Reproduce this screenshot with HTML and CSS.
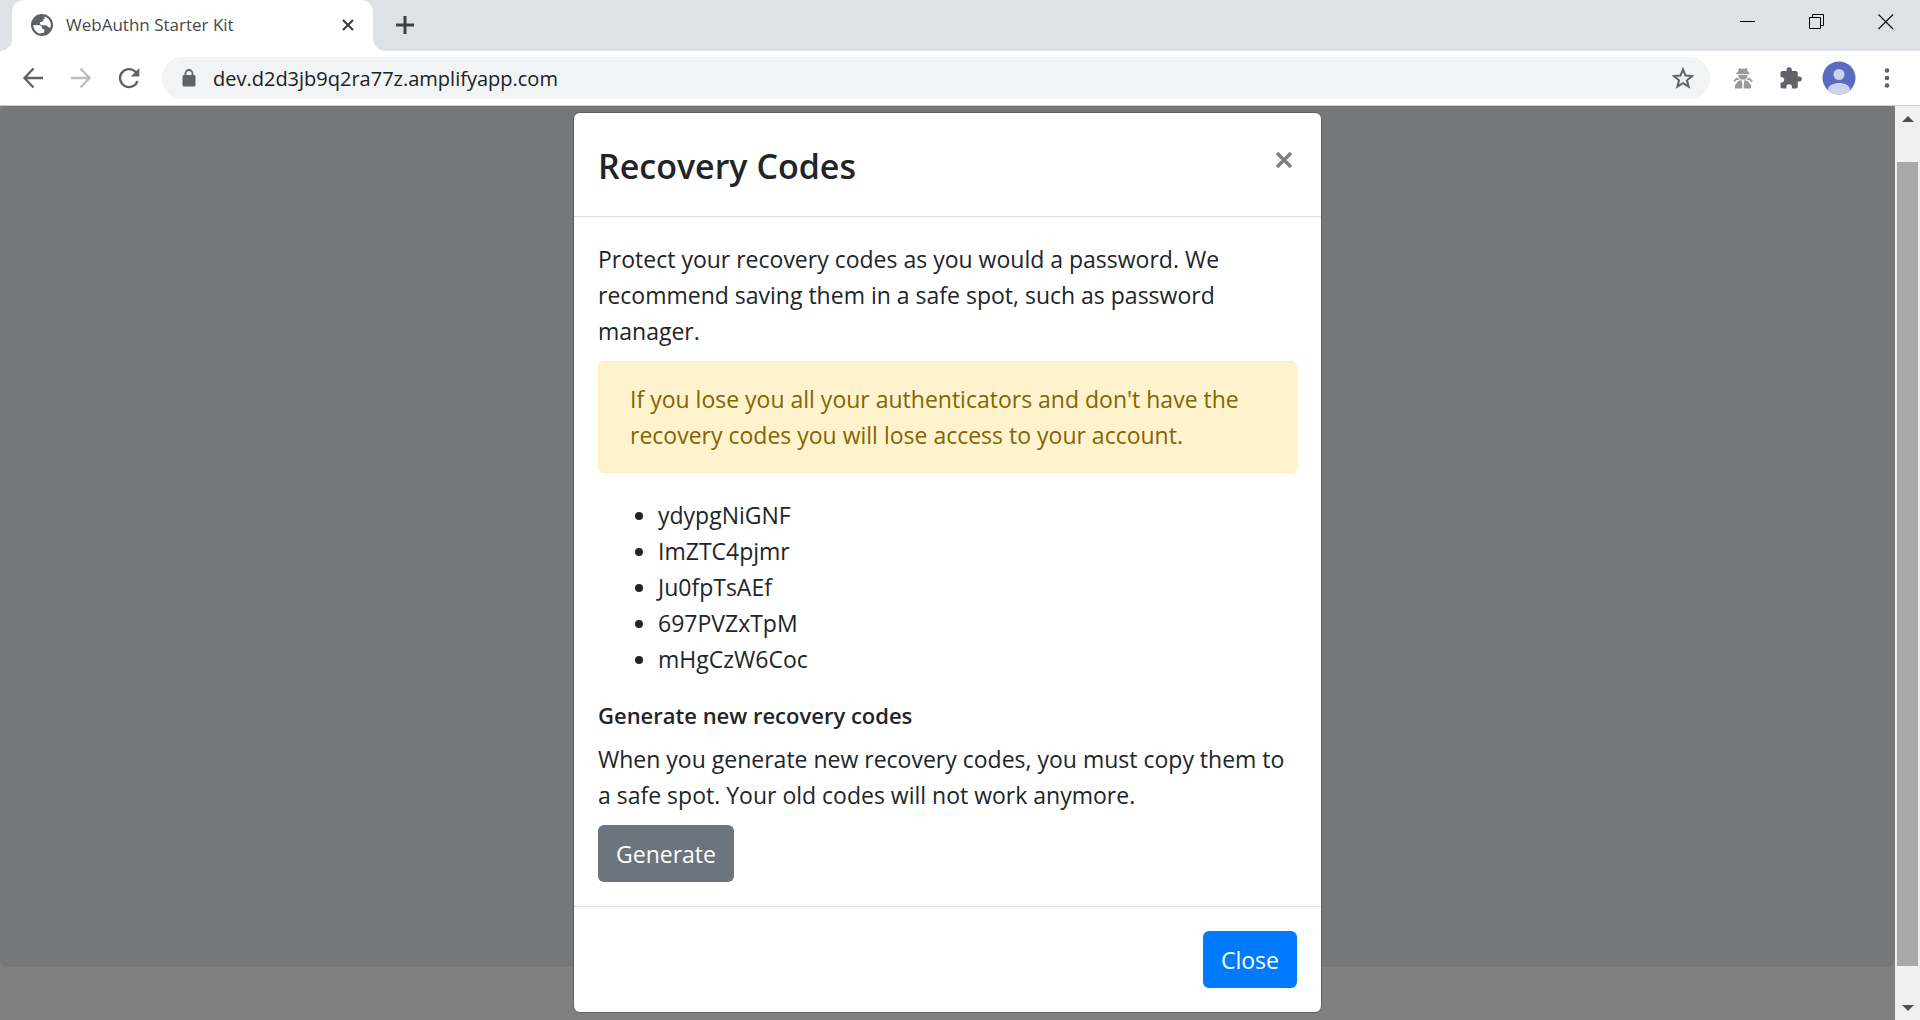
FILE: index.html
```html
<!DOCTYPE html>
<html lang="en">
<head>
<meta charset="utf-8">
<title>WebAuthn Starter Kit</title>
<link rel="stylesheet" href="styles.css">
</head>
<body>
<header class="browser">
  <div class="tabstrip">
    <div class="tab">
      <svg class="globe" width="22" height="22" viewBox="0 0 22 22" aria-hidden="true"><circle cx="11" cy="11" r="11" fill="#5f6368"/><path d="M13 2.500C17 3.300 19.800 6.800 19.800 11c0 .8-.1 1.500-.3 2.200-1 .6-2.300.4-2.800-.7-.5-1-1.300-1.300-2.600-1.300H11c-1.300 0-2-.8-2-1.900s.8-1.800 2-1.800c1 0 1.300-.5 1.300-1.300 0-.9.4-1.200 1.200-1.400.6-.2.4-1.500-.5-2.300z" fill="#fff"/><path d="M2.300 11h5.200c2 0 3.500 1.200 3.500 3 0 .8.500 1 1.300 1 1 0 1.300.6 1.200 1.500l-.3 1.200c-.2.800-.7 1.300-1.500 1.300H11c-1 0-1.500.3-1.800.6C5.300 18.800 2.300 15.300 2.300 11z" fill="#fff"/></svg>
      <span class="tab-title">WebAuthn Starter Kit</span>
      <button class="icon-btn" aria-label="Close tab"><svg width="14" height="14" viewBox="0 0 14 14"><path d="M2 2l10 10M12 2L2 12" stroke="#3c4043" stroke-width="2.200" fill="none"/></svg></button>
    </div>
    <button class="icon-btn new-tab" aria-label="New tab"><svg width="18" height="18" viewBox="0 0 18 18"><path d="M9 0v18M0 9h18" stroke="#3c4043" stroke-width="3" fill="none"/></svg></button>
    <div class="window-controls">
      <button class="icon-btn" aria-label="Minimize"><svg width="16" height="16" viewBox="0 0 16 16"><path d="M0 7.500h15" stroke="#000" fill="none"/></svg></button>
      <button class="icon-btn" aria-label="Restore"><svg width="16" height="16" viewBox="0 0 16 16"><path d="M.5 3.500h11v11H.5zM3.500 3.500v-3h11v11h-3" stroke="#000" fill="none"/></svg></button>
      <button class="icon-btn" aria-label="Close window"><svg width="16" height="16" viewBox="0 0 16 16"><path d="M.5.5l14.500 14.500M15 .5L.5 15" stroke="#111" stroke-width="1.200" fill="none"/></svg></button>
    </div>
  </div>
  <div class="toolbar">
    <div class="nav">
      <button class="icon-btn" aria-label="Back"><svg width="24" height="24" viewBox="0 0 24 24"><path d="M22 12H4M12.500 2.500L3.500 12l9 9.500" stroke="#5f6368" stroke-width="2.400" fill="none"/></svg></button>
      <button class="icon-btn" aria-label="Forward"><svg width="24" height="24" viewBox="0 0 24 24"><path d="M2 12h18M11.500 2.500l9 9.500-9 9.500" stroke="#babcbe" stroke-width="2.400" fill="none"/></svg></button>
      <button class="icon-btn" aria-label="Reload"><svg width="24" height="24" viewBox="0 0 24 24"><path d="M20.500 15.200A9 9 0 1 1 18.300 5.600L20 7.500" stroke="#5f6368" stroke-width="2.400" fill="none"/><path d="M22.300 2v8.500h-8.500z" fill="#5f6368"/></svg></button>
    </div>
    <div class="omnibox">
      <svg width="14" height="18" viewBox="0 0 14 18" aria-hidden="true"><rect x="0.500" y="6" width="13" height="11.500" rx="1.500" fill="#5f6368"/><path d="M3.500 7V4.500a3.500 3.500 0 0 1 7 0V7" stroke="#5f6368" stroke-width="1.800" fill="none"/></svg>
      <input class="url" type="text" aria-label="Address" value="dev.d2d3jb9q2ra77z.amplifyapp.com">
      <button class="icon-btn" aria-label="Bookmark"><svg width="22" height="22" viewBox="0 0 22 22"><path d="M11 2.500l2.500 6.100 6.500.5-5 4.200 1.600 6.400-5.600-3.500-5.600 3.500L7 13.300 2 9.100l6.500-.5z" stroke="#5f6368" stroke-width="2" fill="none"/></svg></button>
    </div>
    <div class="actions">
      <button class="icon-btn" aria-label="Extension"><svg width="20" height="22" viewBox="0 0 20 22" fill="#999"><path d="M5 5L6 1l2.200.8h3.600L14 1l1 4 1.500.6v1.600h-13V5.600zM5.500 8h9v2L12.500 12.500h-5L5.500 10zM0 14l3.300-3.300 3 1-.6 1.500-2-.4-2 2.200zM20 14l-3.300-3.300-3 1 .6 1.500 2-.4 2 2.200z"/><path d="M5 14.200l3.500-1.200.8 4.500v4H2v-3.300zM15 14.200l-3.500-1.200-.8 4.500v4H18v-3.300z"/></svg></button>
      <button class="icon-btn" aria-label="Extensions"><svg width="22" height="22" viewBox="0 0 22 22"><path d="M19.300 9.500h-1.500V6a2 2 0 0 0-2-2h-4V2.800a2.600 2.600 0 0 0-5.200 0V4H2.500a2 2 0 0 0-2 2v4H2a2.800 2.800 0 0 1 0 5.500H.5V19.500a2 2 0 0 0 2 2h3.800V20a2.800 2.800 0 0 1 5.600 0v1.500h3.900a2 2 0 0 0 2-2v-5h1.500a2.500 2.500 0 0 0 0-5z" fill="#5f6368"/></svg></button>
      <button class="icon-btn" aria-label="Profile"><svg width="34" height="34" viewBox="0 0 34 34"><defs><clipPath id="avatar"><circle cx="17" cy="17" r="16.500"/></clipPath></defs><circle cx="17" cy="17" r="16.500" fill="#5c6bc0"/><g clip-path="url(#avatar)" fill="#ced3ec"><circle cx="17" cy="13.500" r="5.500"/><path d="M6 34v-5c0-5 6-7 11-7s11 2 11 7v5z"/></g></svg></button>
      <button class="icon-btn" aria-label="Menu"><svg width="6" height="20" viewBox="0 0 6 20" fill="#5f6368"><circle cx="3" cy="2.500" r="2.300"/><circle cx="3" cy="10" r="2.300"/><circle cx="3" cy="17.500" r="2.300"/></svg></button>
    </div>
  </div>
</header>
<div class="viewport">
  <main class="page">
    <div class="jumbotron"></div>
    <section class="modal" role="dialog" aria-modal="true" aria-labelledby="modal-title">
      <header class="modal-header">
        <h2 class="modal-title" id="modal-title">Recovery Codes</h2>
        <button class="icon-btn dismiss" aria-label="Dismiss"><svg width="18" height="18" viewBox="0 0 18 18"><path d="M2 2l14 14M16 2L2 16" stroke="#7f7f7f" stroke-width="3.600" fill="none"/></svg></button>
      </header>
      <div class="modal-body">
        <p class="text">Protect your recovery codes as you would a password. We<br>recommend saving them in a safe spot, such as password<br>manager.</p>
        <div class="alert" role="alert">If you lose you all your authenticators and don't have the<br>recovery codes you will lose access to your account.</div>
        <ul class="codes">
          <li>ydypgNiGNF</li>
          <li>ImZTC4pjmr</li>
          <li>Ju0fpTsAEf</li>
          <li>697PVZxTpM</li>
          <li>mHgCzW6Coc</li>
        </ul>
        <h3 class="subtitle">Generate new recovery codes</h3>
        <p class="text">When you generate new recovery codes, you must copy them to<br>a safe spot. Your old codes will not work anymore.</p>
        <button class="btn btn-secondary">Generate</button>
      </div>
      <footer class="modal-footer">
        <button class="btn btn-primary">Close</button>
      </footer>
    </section>
  </main>
  <div class="scrollbar" aria-hidden="true">
    <svg width="12" height="6" viewBox="0 0 12 6"><path d="M0 6l6-6 6 6z" fill="#505050"/></svg>
    <div class="thumb"></div>
    <svg width="12" height="6" viewBox="0 0 12 6"><path d="M0 0l6 6 6-6z" fill="#505050"/></svg>
  </div>
</div>
</body>
</html>
```
FILE: styles.css
```css
* { box-sizing: border-box; }

body {
  margin: 0;
  min-height: 100vh;
  display: flex;
  flex-direction: column;
  font-family: "Open Sans", "Noto Sans", sans-serif;
  color: #212529;
}

.icon-btn {
  display: flex;
  justify-content: center;
  padding: 0;
  border: 0;
  background: none;
}

/* Browser chrome */
.tabstrip {
  display: flex;
  align-items: center;
  height: 51px;
  padding: 0 10px 0 12px;
  background: #dee1e6;
}

.tab {
  position: relative;
  display: flex;
  align-items: center;
  gap: 13px;
  width: 361px;
  height: 51px;
  padding: 0 18px 2px 19px;
  border-radius: 12px 12px 0 0;
  background: #fff;
}

.tab::before,
.tab::after {
  content: "";
  position: absolute;
  bottom: 0;
  width: 12px;
  height: 12px;
}

.tab::before {
  right: 100%;
  background: radial-gradient(circle at 0 0, transparent 12px, #fff 12px);
}

.tab::after {
  left: 100%;
  background: radial-gradient(circle at 100% 0, transparent 12px, #fff 12px);
}

.tab-title {
  flex: 1;
  font-size: 17px;
  color: #45494d;
}

.new-tab { margin: 0 0 2px 23px; }

.window-controls {
  display: flex;
  gap: 53px;
  margin: 0 16px 8px auto;
}

.toolbar {
  display: flex;
  align-items: center;
  height: 55px;
  padding: 0 16px 0 21px;
  border-bottom: 1px solid #ccc;
  background: #fff;
}

.nav {
  display: flex;
  gap: 24px;
}

.omnibox {
  flex: 1;
  display: flex;
  align-items: center;
  height: 42px;
  margin: 0 16px 0 21px;
  padding: 0 16px 0 20px;
  border-radius: 21px;
  background: #f1f3f4;
}

.url {
  flex: 1;
  margin-left: 17px;
  padding: 0;
  border: 0;
  background: none;
  font: inherit;
  font-size: 20px;
  color: #202124;
}

.actions {
  display: flex;
  align-items: center;
  gap: 14px;
}

.actions .icon-btn { width: 34px; }

/* Page area */
.viewport {
  flex: 1;
  display: flex;
}

.page {
  flex: 1;
  display: grid;
  background: #808080;
}

.jumbotron {
  grid-area: 1 / 1;
  margin-bottom: 53px;
  border-radius: 8px;
  background: #757779;
}

.modal {
  grid-area: 1 / 1;
  place-self: start center;
  width: 749px;
  margin: 6px 0 7px;
  border: 1px solid #5e5f60;
  border-radius: 7px;
  background: #fff;
  font-size: 23px;
  line-height: 36px;
}

.modal-header {
  display: flex;
  justify-content: space-between;
  align-items: flex-start;
  padding: 24px;
  border-bottom: 1px solid #dee2e6;
}

.modal-title {
  margin: 0;
  padding-top: 3px;
  font-size: 34px;
  font-weight: 600;
  line-height: 52px;
}

.dismiss { padding: 14px 4px; }

.modal-body { padding: 24px; }

.text { margin: 0 0 12px; }

.alert {
  margin-bottom: 24px;
  padding: 19px 31px;
  border: 1px solid #ffeeba;
  border-radius: 6px;
  background: #fff3cd;
  color: #856404;
}

.codes {
  margin: 0 0 24px;
  padding-left: 60px;
}

.subtitle {
  margin: 0 0 12px;
  font-size: 22px;
  font-weight: 600;
  line-height: 28px;
}

.btn {
  display: block;
  height: 57px;
  padding: 0 18px;
  border: 0;
  border-radius: 6px;
  font: inherit;
  color: #fff;
}

.btn-secondary { background: #6c757d; }
.btn-primary { background: #007bff; }

.modal-footer {
  display: flex;
  justify-content: flex-end;
  padding: 24px;
  border-top: 1px solid #dee2e6;
}

.scrollbar {
  display: flex;
  flex-direction: column;
  align-items: center;
  width: 25px;
  padding: 10px 2px 9px;
  background: #f0f0f0;
}

.thumb {
  flex: 1;
  width: 21px;
  margin: 40px 0 39px;
  background: #a8a8a8;
}
```
